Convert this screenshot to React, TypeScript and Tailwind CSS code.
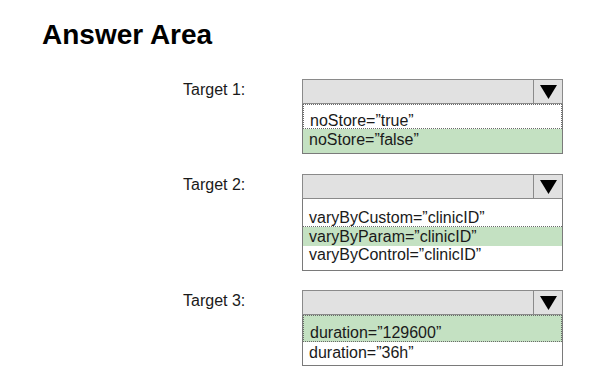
import { ReactNode } from "react";

interface Option {
  label: string;
  selected?: boolean;
  focus?: "box" | "bottom";
  h: number;
  pt: number;
}

interface Target {
  name: string;
  mt: number;
  options: Option[];
}

const targets: Target[] = [
  {
    name: "Target 1:",
    mt: 0,
    options: [
      { label: "noStore=”true”", focus: "box", h: 25, pt: 7 },
      { label: "noStore=”false”", selected: true, h: 24, pt: 2 }
    ]
  },
  {
    name: "Target 2:",
    mt: 20,
    options: [
      { label: "varyByCustom=”clinicID”", focus: "bottom", h: 28, pt: 10 },
      { label: "varyByParam=”clinicID”", selected: true, h: 19, pt: 1 },
      { label: "varyByControl=”clinicID”", h: 24, pt: 0 }
    ]
  },
  {
    name: "Target 3:",
    mt: 19,
    options: [
      { label: "duration=”129600”", selected: true, focus: "box", h: 27, pt: 8 },
      { label: "duration=”36h”", h: 23, pt: 2 }
    ]
  }
];

function OptionRow({ option }: { option: Option }) {
  const bg = option.selected ? "bg-[#c4e1c2]" : "bg-white";
  const focus =
    option.focus === "box"
      ? "border border-dotted border-[#6a6a6a]"
      : option.focus === "bottom"
        ? "border-b border-dotted border-[#6a6a6a]"
        : "";
  return (
    <div
      className={`pl-[6px] text-[16px] leading-[18px] whitespace-nowrap text-[#1a1a1a] ${bg} ${focus}`}
      style={{ height: option.h, paddingTop: option.pt }}
    >
      {option.label}
    </div>
  );
}

function Dropdown({ options }: { options: Option[] }): ReactNode {
  return (
    <div className="w-[261px]">
      <div className="flex h-[25px] border border-[#8a8a8a] bg-[#e1e1e1]">
        <div className="flex-1" />
        <div className="flex w-[29px] items-center justify-center border-l border-[#8a8a8a]">
          <svg width="17" height="14" viewBox="0 0 17 14">
            <polygon points="0,0 17,0 8.5,14" fill="#000" />
          </svg>
        </div>
      </div>
      <div className="border-x border-b border-[#7a7a7a]">
        {options.map((o) => (
          <OptionRow key={o.label} option={o} />
        ))}
      </div>
    </div>
  );
}

export default function App() {
  return (
    <div
      className="h-[386px] w-[593px] bg-white pt-[19px] pl-[42px]"
      style={{ fontFamily: '"Liberation Sans", Arial, sans-serif' }}
    >
      <h1 className="text-[28px] leading-[32px] font-bold text-black">
        Answer Area
      </h1>
      <div className="mt-[28px] flex flex-col">
        {targets.map((t) => (
          <div key={t.name} className="flex" style={{ marginTop: t.mt }}>
            <div className="w-[260px] pt-[2px] pl-[141px] text-[16px] leading-[18px] text-[#1a1a1a]">
              {t.name}
            </div>
            <Dropdown options={t.options} />
          </div>
        ))}
      </div>
    </div>
  );
}
